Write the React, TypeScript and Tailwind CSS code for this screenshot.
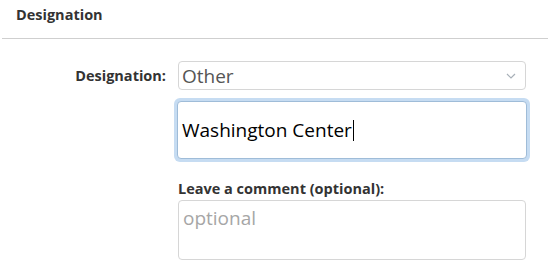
export default function App() {
  return (
    <div className="h-[277px] w-[548px] bg-white font-['Open_Sans','Liberation_Sans',sans-serif] text-[#333]">
      <div className="ml-[2px] border-b border-[#cfcfcf] pl-[14px] pt-[6px] pb-[14px]">
        <h2 className="text-[14.5px] font-bold leading-[18px] text-[#333]">Designation</h2>
      </div>

      <div className="mt-[22px] flex">
        <div className="w-[166px] shrink-0 pt-[6px] text-right text-[14.5px] font-bold leading-[18px]">
          Designation:
        </div>
        <div className="ml-[12px] flex w-[348px] flex-col">
          <div className="flex h-[29px] items-center justify-between rounded-[4px] border border-[#d6d6d6] pl-[3px] pr-[9px]">
            <span className="text-[19px] leading-[22px] text-[#555]">Other</span>
            <svg width="10" height="6" viewBox="0 0 10 6" className="text-[#a8b0b8]">
              <path d="M1 1l4 4 4-4" fill="none" stroke="currentColor" strokeWidth="1.2" />
            </svg>
          </div>

          <div className="-mx-[4px] mt-[8px] rounded-[6px] bg-[#c6dcf2] p-[3px]">
            <div className="flex h-[58px] items-center rounded-[4px] border border-[#9fbcd8] bg-white pl-[4px]">
              <span className="text-[19px] leading-[22px] text-black">Washington Center</span>
              <span className="ml-[1px] inline-block h-[21px] w-px bg-black" />
            </div>
          </div>

          <label className="mt-[18px] text-[14.5px] font-bold leading-[18px]">Leave a comment (optional):</label>
          <div className="mt-[2px] h-[60px] rounded-[4px] border border-[#d6d6d6] px-[4px] pt-[6px]">
            <span className="text-[19px] leading-[22px] text-[#a6a6a6]">optional</span>
          </div>
        </div>
      </div>
    </div>
  );
}
